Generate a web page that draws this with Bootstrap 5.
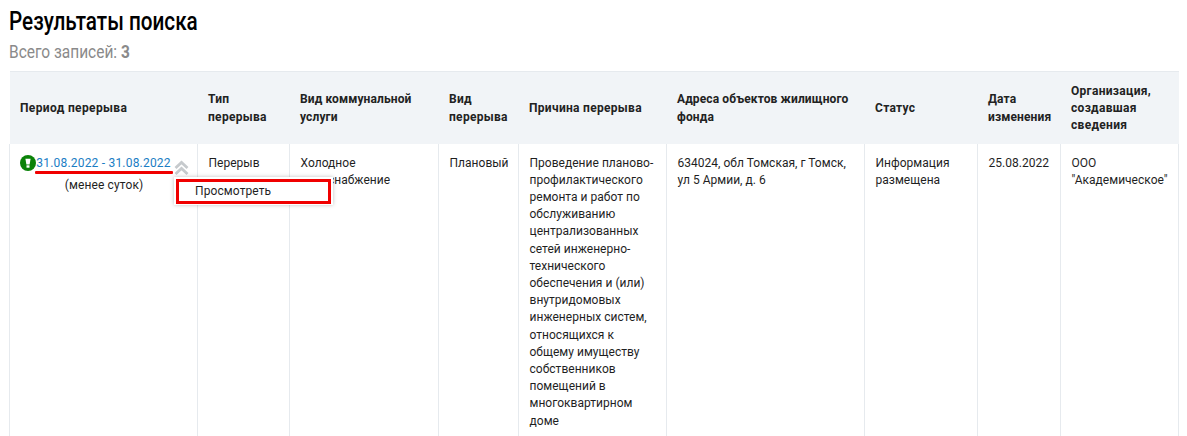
<!DOCTYPE html>
<html lang="ru"><head><meta charset="utf-8"><title>Результаты поиска</title>
<link href="https://cdn.jsdelivr.net/npm/bootstrap@5.3.0/dist/css/bootstrap.min.css" rel="stylesheet">
<style>
html,body{height:436px;overflow:hidden;background:#fff}
body{font-family:Roboto,"Liberation Sans",sans-serif;font-size:12px;color:#1f1f1f;padding:0 9px}
.page-title{font-size:25px;line-height:28px;font-weight:500;color:#000;margin:8px 0 0;width:max-content;transform:scaleX(.828);transform-origin:left center}
.total-line{font-size:18px;line-height:20px;color:#8a8a8a;margin:6px 0 9px;width:max-content;transform:scaleX(.86);transform-origin:left center}
.res-table{table-layout:fixed;width:1169px;border-collapse:collapse;margin:0;--bs-table-color:#1f1f1f}
.res-table th{background:#f1f4f7;height:72px;font-weight:700;line-height:17.3px;padding:2px 10.5px 0;vertical-align:middle;border:0;color:#222;letter-spacing:.3px;box-shadow:none}
.res-table th.tight-head{letter-spacing:.12px}
.res-table th.wide-head{letter-spacing:.36px}
.res-table thead tr{border-top:1px solid #e6eaee}
.res-table td{padding:11px 10.5px 9px;line-height:17.2px;vertical-align:top;border:0;border-right:1px solid #e6eaee;letter-spacing:.02px;box-shadow:none}
.res-table td:first-child{border-left:1px solid #e6eaee;text-align:center;padding:11px 0 0}
.c1{width:188px}.c2{width:92px}.c3{width:149px}.c4{width:80px}.c5{width:148px}.c6{width:198px}.c7{width:113px}.c8{width:83px}.c9{width:118px}
.period-cell{position:relative}
.period-link{color:#1a7dc4;text-decoration:none;font-size:12px;letter-spacing:.2px}
.status-dot{position:absolute;left:10px;top:11px;width:16px;height:16px}
.chev{position:absolute;left:164px;top:16px;width:15px;height:16px}
.red-line{position:absolute;left:25px;top:27px;width:138px;height:3px;background:#f00000;border-radius:1px}
.sub-note{display:block;margin-top:5px;padding-left:1px;letter-spacing:.13px}
.row-menu{position:absolute;left:164px;top:33px;width:159px;height:28px;background:#fff;box-shadow:0 0 4px rgba(0,0,0,.25);z-index:2;padding:2px}
.row-menu-item{display:block;height:25px;border:3px solid #f00000;text-align:left;padding:0 0 0 16px;line-height:19px;color:#1f1f1f;text-decoration:none;letter-spacing:.1px}
</style></head><body>
<h1 class="page-title">Результаты поиска</h1>
<p class="total-line">Всего записей: <b>3</b></p>
<table class="table res-table">
<colgroup><col class="c1"><col class="c2"><col class="c3"><col class="c4"><col class="c5"><col class="c6"><col class="c7"><col class="c8"><col class="c9"></colgroup>
<thead><tr>
<th class="wide-head">Период перерыва</th><th>Тип перерыва</th><th class="tight-head">Вид коммунальной услуги</th><th>Вид перерыва</th><th>Причина перерыва</th><th class="tight-head">Адреса объектов жилищного фонда</th><th>Статус</th><th class="tight-head">Дата изменения</th><th>Организация, создавшая сведения</th>
</tr></thead>
<tbody><tr>
<td class="period-cell">
<svg class="status-dot" viewBox="0 0 16 16"><circle cx="8" cy="8" r="8" fill="#0a8208"/><path d="M5.4 3.8h5.2l-1 5.6H6.4z" fill="#fff"/><rect x="6.5" y="10.3" width="3" height="2.4" fill="#fff"/></svg>
<a href="#" class="period-link">31.08.2022 - 31.08.2022</a>
<svg class="chev" viewBox="0 0 15 16"><path d="M1.5 8 7.5 2.5 13.5 8M1.5 14 7.5 8.5 13.5 14" fill="none" stroke="#c6cacd" stroke-width="2.8"/></svg>
<span class="red-line"></span>
<span class="sub-note">(менее суток)</span>
<div class="row-menu"><a href="#" class="row-menu-item">Просмотреть</a></div>
</td>
<td>Перерыв</td>
<td>Холодное водоснабжение</td>
<td>Плановый</td>
<td>Проведение планово-профилактического ремонта и работ по обслуживанию централизованных сетей инженерно-технического обеспечения и (или) внутридомовых инженерных систем, относящихся к общему имуществу собственников помещений в многоквартирном доме</td>
<td>634024, обл Томская, г Томск, ул 5 Армии, д. 6</td>
<td>Информация размещена</td>
<td>25.08.2022</td>
<td>ООО "Академическое"</td>
</tr></tbody></table>
<script src="https://cdn.jsdelivr.net/npm/bootstrap@5.3.0/dist/js/bootstrap.bundle.min.js"></script>
</body></html>
